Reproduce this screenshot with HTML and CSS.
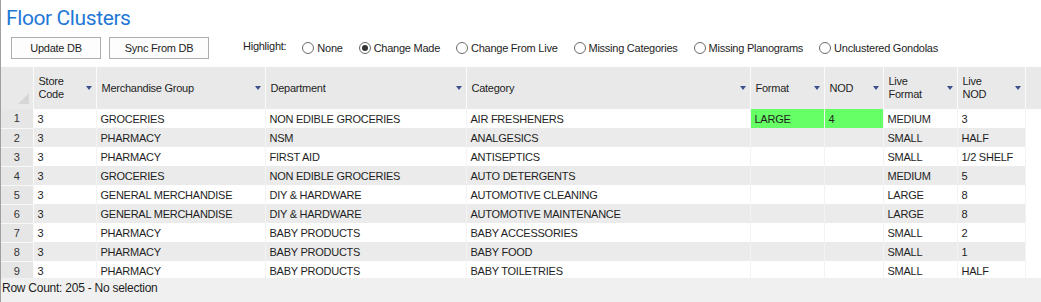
FILE: index.html
```html
<!DOCTYPE html>
<html lang="en">
<head>
    <meta charset="UTF-8">
    <title>Floor Clusters</title>
    <link rel="stylesheet" href="styles.css">
</head>
<body>
    <div class="window">
        <h1 class="title">Floor Clusters</h1>

        <div class="toolbar">
            <button class="btn btn-update">Update DB</button>
            <button class="btn btn-sync">Sync From DB</button>
            <span class="highlight-label">Highlight:</span>
            <label class="radio"><span class="radio-circle"></span>None</label>
            <label class="radio"><span class="radio-circle checked"></span>Change Made</label>
            <label class="radio"><span class="radio-circle"></span>Change From Live</label>
            <label class="radio"><span class="radio-circle"></span>Missing Categories</label>
            <label class="radio"><span class="radio-circle"></span>Missing Planograms</label>
            <label class="radio"><span class="radio-circle"></span>Unclustered Gondolas</label>
        </div>

        <div class="grid">
            <table class="grid-table">
                <colgroup>
                    <col class="col-rowhead">
                    <col class="col-store">
                    <col class="col-group">
                    <col class="col-dept">
                    <col class="col-cat">
                    <col class="col-format">
                    <col class="col-nod">
                    <col class="col-liveformat">
                    <col class="col-livenod">
                </colgroup>
                <thead>
                    <tr>
                        <th class="corner"><span class="corner-mark"></span></th>
                        <th><div class="head">Store<br>Code<span class="sort"></span></div></th>
                        <th><div class="head">Merchandise Group<span class="sort"></span></div></th>
                        <th><div class="head">Department<span class="sort"></span></div></th>
                        <th><div class="head">Category<span class="sort"></span></div></th>
                        <th><div class="head">Format<span class="sort"></span></div></th>
                        <th><div class="head">NOD<span class="sort"></span></div></th>
                        <th><div class="head">Live<br>Format<span class="sort"></span></div></th>
                        <th><div class="head">Live<br>NOD<span class="sort"></span></div></th>
                    </tr>
                </thead>
                <tbody>
                    <tr>
                        <th class="rownum">1</th><td>3</td><td>GROCERIES</td><td>NON EDIBLE GROCERIES</td><td>AIR FRESHENERS</td>
                        <td class="changed">LARGE</td><td class="changed">4</td><td>MEDIUM</td><td>3</td>
                    </tr>
                    <tr>
                        <th class="rownum">2</th><td>3</td><td>PHARMACY</td><td>NSM</td><td>ANALGESICS</td>
                        <td></td><td></td><td>SMALL</td><td>HALF</td>
                    </tr>
                    <tr>
                        <th class="rownum">3</th><td>3</td><td>PHARMACY</td><td>FIRST AID</td><td>ANTISEPTICS</td>
                        <td></td><td></td><td>SMALL</td><td>1/2 SHELF</td>
                    </tr>
                    <tr>
                        <th class="rownum">4</th><td>3</td><td>GROCERIES</td><td>NON EDIBLE GROCERIES</td><td>AUTO DETERGENTS</td>
                        <td></td><td></td><td>MEDIUM</td><td>5</td>
                    </tr>
                    <tr>
                        <th class="rownum">5</th><td>3</td><td>GENERAL MERCHANDISE</td><td>DIY &amp; HARDWARE</td><td>AUTOMOTIVE CLEANING</td>
                        <td></td><td></td><td>LARGE</td><td>8</td>
                    </tr>
                    <tr>
                        <th class="rownum">6</th><td>3</td><td>GENERAL MERCHANDISE</td><td>DIY &amp; HARDWARE</td><td>AUTOMOTIVE MAINTENANCE</td>
                        <td></td><td></td><td>LARGE</td><td>8</td>
                    </tr>
                    <tr>
                        <th class="rownum">7</th><td>3</td><td>PHARMACY</td><td>BABY PRODUCTS</td><td>BABY ACCESSORIES</td>
                        <td></td><td></td><td>SMALL</td><td>2</td>
                    </tr>
                    <tr>
                        <th class="rownum">8</th><td>3</td><td>PHARMACY</td><td>BABY PRODUCTS</td><td>BABY FOOD</td>
                        <td></td><td></td><td>SMALL</td><td>1</td>
                    </tr>
                    <tr>
                        <th class="rownum">9</th><td>3</td><td>PHARMACY</td><td>BABY PRODUCTS</td><td>BABY TOILETRIES</td>
                        <td></td><td></td><td>SMALL</td><td>HALF</td>
                    </tr>
                </tbody>
            </table>
        </div>

        <div class="status">Row Count: 205 - No selection</div>
    </div>
</body>
</html>
```

FILE: styles.css
```css
body {
    margin: 0;
    padding: 0;
    background-color: #fff;
    font-family: 'Liberation Sans', Arial, sans-serif;
    font-size: 11px;
    letter-spacing: -0.25px;
    color: #1e1e1e;
}

.window {
    width: 1040px;
    height: 302px;
    border-left: 1px solid #a0a0a0;
    display: flex;
    flex-direction: column;
    overflow: hidden;
}

.title {
    margin: 5px 0 0 5px;
    font-family: Roboto, 'Liberation Sans', sans-serif;
    font-size: 21px;
    font-weight: normal;
    letter-spacing: -0.4px;
    line-height: 26px;
    color: #1f78d6;
}

/* buttons + highlight radios */
.toolbar {
    display: flex;
    align-items: center;
    margin: 6px 0 0 10px;
    height: 22px;
}

.btn {
    height: 22px;
    margin-right: 8px;
    padding: 0;
    background-color: #fdfdfd;
    border: 1px solid #adadad;
    font-family: inherit;
    font-size: 11px;
    letter-spacing: inherit;
    color: #1e1e1e;
}

.btn-update {
    width: 90px;
}

.btn-sync {
    width: 100px;
}

.highlight-label {
    margin: 0 16px 4px 26px;
}

.radio {
    display: flex;
    align-items: center;
    margin-right: 16px;
}

.radio-circle {
    width: 10px;
    height: 10px;
    margin-right: 3px;
    border: 1px solid #6a6a6a;
    border-radius: 50%;
    background-color: #fff;
    display: flex;
    align-items: center;
    justify-content: center;
}

.radio-circle.checked::after {
    content: '';
    width: 6px;
    height: 6px;
    border-radius: 50%;
    background-color: #333;
}

/* data grid */
.grid {
    margin-top: 8px;
    height: 211px;
    overflow: hidden;
    background: linear-gradient(#e9e9e9 0, #e9e9e9 42px, #fff 42px);
}

.grid-table {
    width: 1024px;
    table-layout: fixed;
    border-collapse: collapse;
}

.col-rowhead { width: 32px; }
.col-store { width: 63px; }
.col-group { width: 169px; }
.col-dept { width: 201px; }
.col-cat { width: 284px; }
.col-format { width: 74px; }
.col-nod { width: 59px; }
.col-liveformat { width: 74px; }
.col-livenod { width: 68px; }

.grid-table thead th {
    height: 42px;
    padding: 0 4px 0 5px;
    background-color: #e9e9e9;
    border-right: 1px solid #fafafa;
    font-weight: normal;
    text-align: left;
    line-height: 13px;
}

.head {
    display: flex;
    align-items: center;
    justify-content: space-between;
}

.sort {
    width: 0;
    height: 0;
    border-left: 3px solid transparent;
    border-right: 3px solid transparent;
    border-top: 4px solid #3e4f8e;
}

.grid-table thead th.corner {
    position: relative;
    padding: 0;
}

.corner-mark {
    position: absolute;
    right: 4px;
    bottom: 5px;
    width: 0;
    height: 0;
    border-left: 11px solid transparent;
    border-bottom: 11px solid #d6d6d6;
}

.grid-table tbody tr {
    height: 19px;
}

.grid-table tbody tr:nth-child(even) td {
    background-color: #ebebeb;
}

.grid-table td {
    padding: 0 4px;
    border-right: 1px solid #f3f3f3;
    white-space: nowrap;
    overflow: hidden;
}

.grid-table .rownum {
    padding: 0;
    background-color: #e6e6e6;
    border-right: 1px solid #fafafa;
    border-bottom: 1px solid #f8f8f8;
    font-weight: normal;
    text-align: center;
    color: #333;
}

.grid-table td.changed {
    background-color: #66ff66;
}

.status {
    flex: 1;
    padding: 3px 0 0 1px;
    background-color: #f0f0f0;
    font-size: 12px;
    line-height: 14px;
}
```
